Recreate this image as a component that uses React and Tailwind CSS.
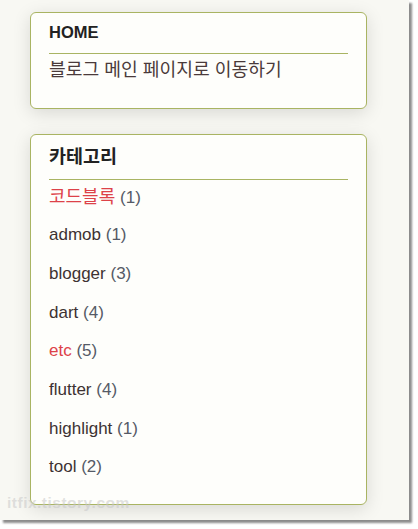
import React from "react";

const categories = [
  { name: "코드블록", count: 1, active: true, ko: true },
  { name: "admob", count: 1 },
  { name: "blogger", count: 3 },
  { name: "dart", count: 4 },
  { name: "etc", count: 5, active: true },
  { name: "flutter", count: 4 },
  { name: "highlight", count: 1 },
  { name: "tool", count: 2 },
];

// 사이드바 위젯 카드
function Widget({ title, ko, children }) {
  return (
    <div className="w-[337px] rounded-[6px] border border-[#a9b462] bg-[#fefefb] px-[18px] pt-[7px] pb-[15px] shadow-[0_4px_18px_rgba(0,0,0,0.13)]">
      <h3
        className={
          ko
            ? "border-b border-[#a9b462] pb-[8px] text-[18.5px] leading-[29px] font-bold text-[#222]"
            : "border-b border-[#a9b462] pb-[8px] text-[16.5px] leading-[25px] font-bold text-[#222]"
        }
      >
        {title}
      </h3>
      {children}
    </div>
  );
}

export default function App() {
  return (
    <div
      className="min-h-screen bg-white"
      style={{ fontFamily: '"Liberation Sans", Arial, "Noto Sans CJK KR", sans-serif' }}
    >
      <div className="relative h-[520px] w-[409px] bg-[#f8f8f3] pt-[12px] pl-[30px] shadow-[3px_3px_2px_rgba(0,0,0,0.45)]">
        <div className="flex flex-col gap-[25px]">
          <Widget title="HOME">
            <div className="h-[38.67px] pt-[5px] text-[18.2px] leading-[22px] text-[#4a3a3a]">
              블로그 메인 페이지로 이동하기
            </div>
          </Widget>

          <Widget title="카테고리" ko>
            <ul>
              {categories.map((c) => (
                <li
                  key={c.name}
                  className="h-[38.67px] pt-[6px] text-[17px] leading-[22px]"
                >
                  <span
                    className={
                      (c.active ? "text-[#dd4249]" : "text-[#3d3232]") +
                      (c.ko ? " text-[18px]" : "")
                    }
                  >
                    {c.name}
                  </span>{" "}
                  <span className="text-[#555a66]">({c.count})</span>
                </li>
              ))}
            </ul>
          </Widget>
        </div>

        {/* 워터마크 */}
        <div className="absolute top-[491px] left-[7px] text-[15.5px] font-bold tracking-[0.5px] text-[rgba(200,200,200,0.55)]">
          itfix.tistory.com
        </div>
      </div>
    </div>
  );
}
